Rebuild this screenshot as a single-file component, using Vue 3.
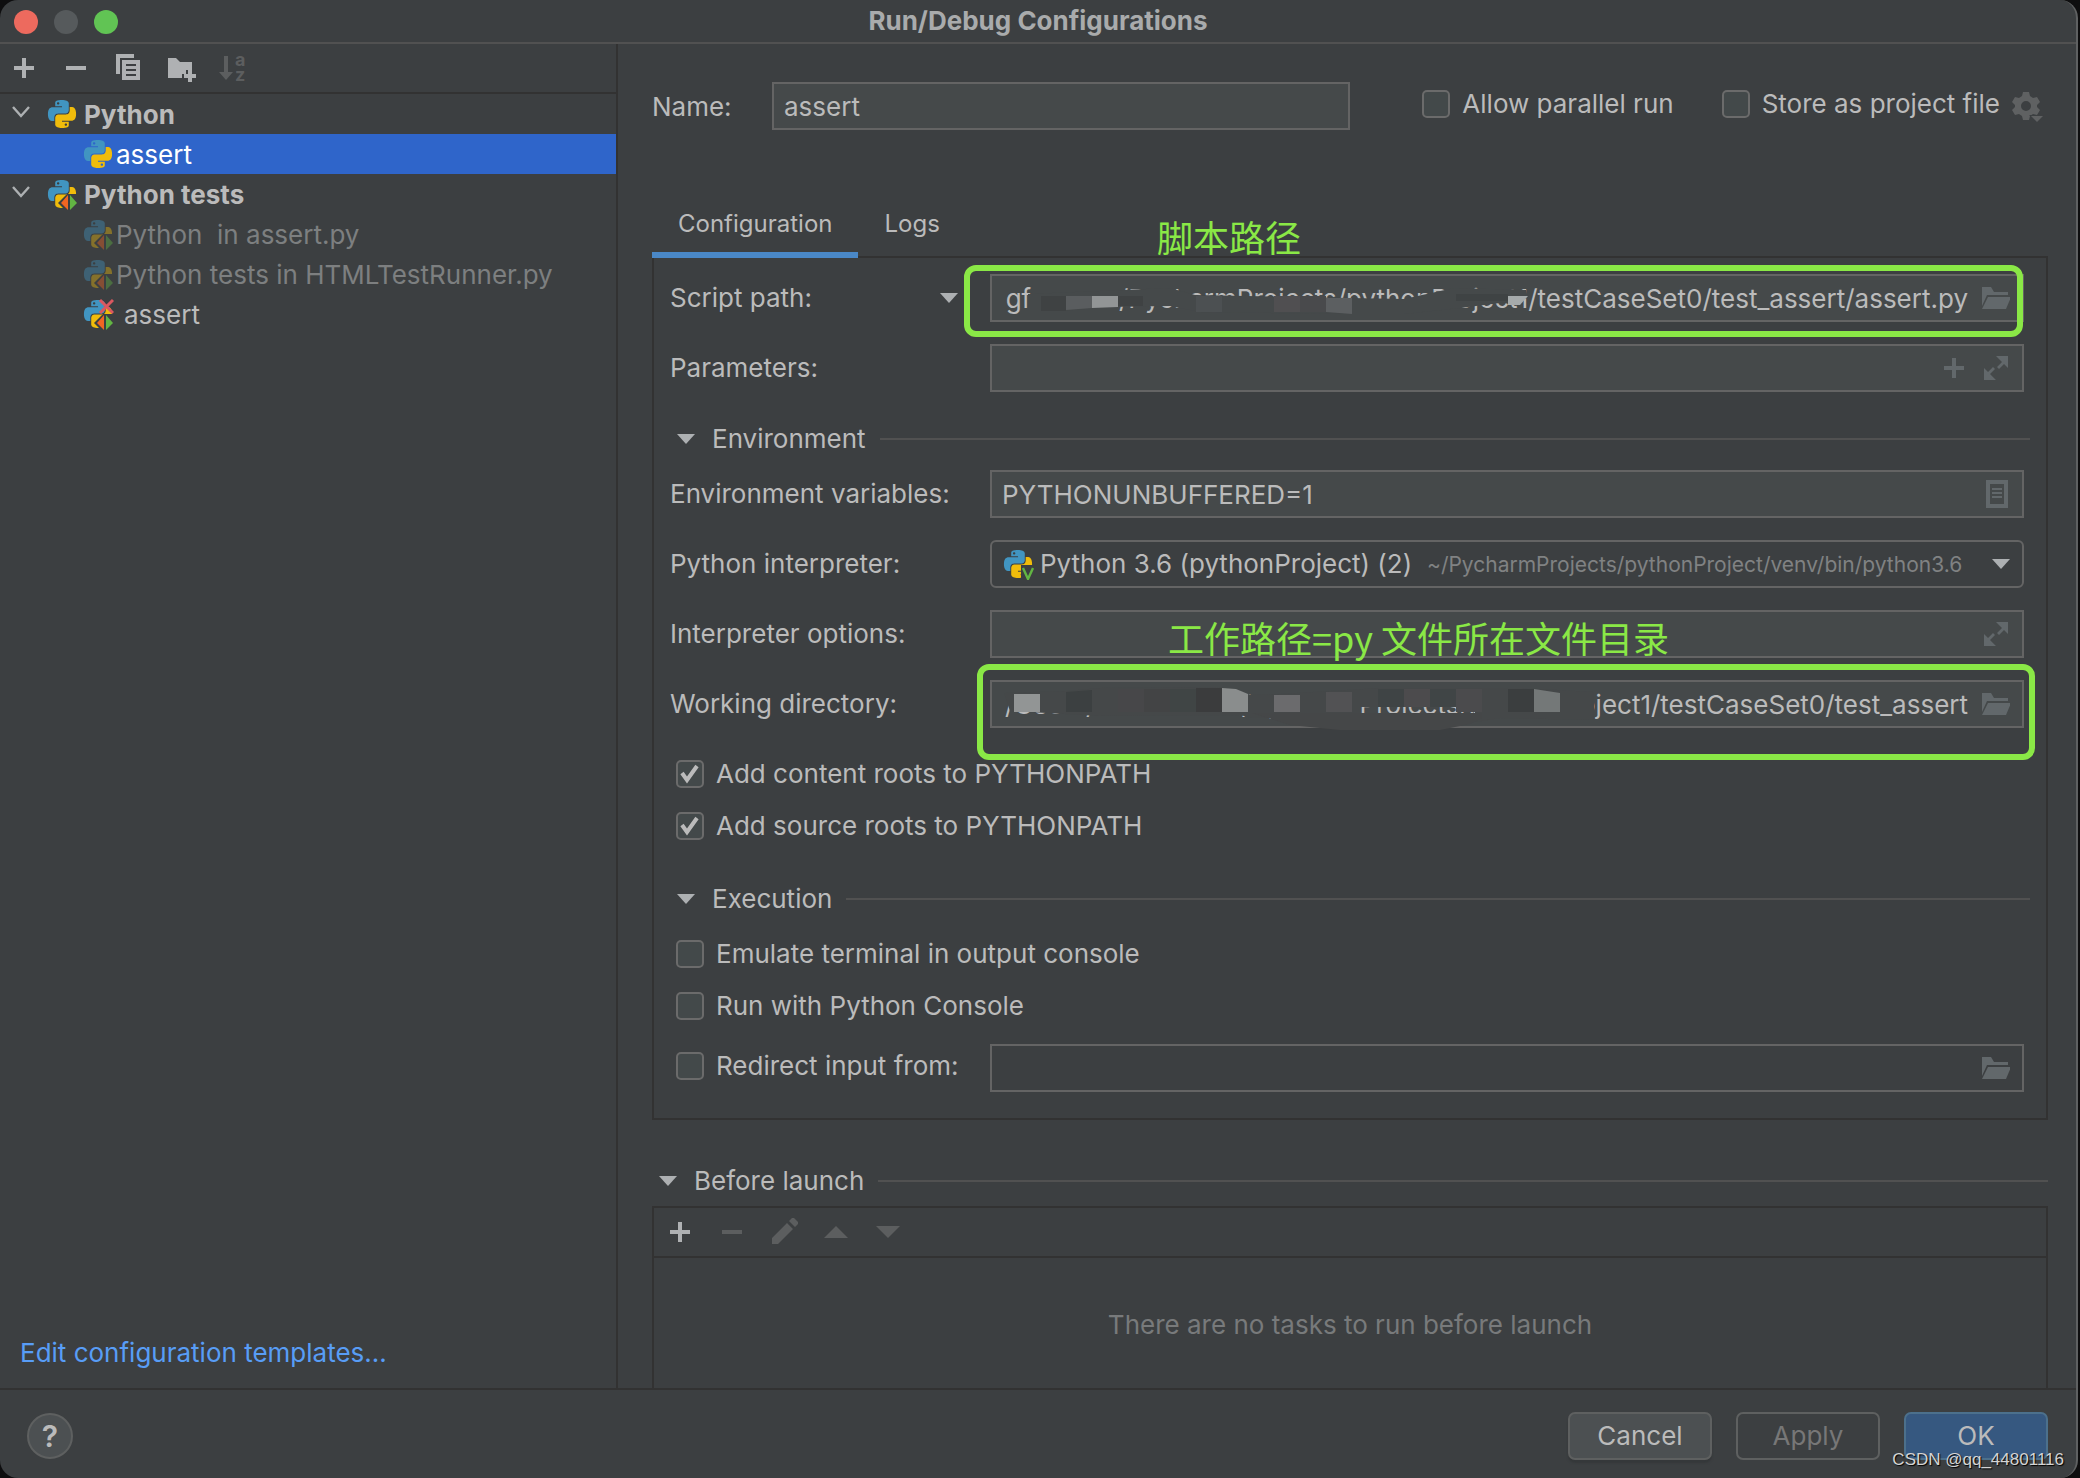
<script setup>
import { ref } from 'vue'

const snake =
  'M14.25.18l.9.2.73.26.59.3.45.32.34.34.25.34.16.33.1.3.04.26.02.2-.01.13V8.5l-.05.63-.13.55-.21.46-.26.38-.3.31-.33.25-.35.19-.35.14-.33.1-.3.07-.26.04-.21.02H8.77l-.69.05-.59.14-.5.22-.41.27-.33.32-.27.35-.2.36-.15.37-.1.35-.07.32-.04.27-.02.21v3.06H3.17l-.21-.03-.28-.07-.32-.12-.35-.18-.36-.26-.36-.36-.35-.46-.32-.59-.28-.73-.21-.88-.14-1.05-.05-1.23.06-1.22.16-1.04.24-.87.32-.71.36-.57.4-.44.42-.33.42-.24.4-.16.36-.1.32-.05.24-.01h.16l.06.01h8.16v-.83H6.18l-.01-2.75-.02-.37.05-.34.11-.31.17-.28.25-.26.31-.23.38-.2.44-.18.51-.15.58-.12.64-.1.71-.06.77-.04.84-.02 1.27.05zm-6.3 1.98l-.23.33-.08.41.08.41.23.34.33.22.41.09.41-.09.33-.22.23-.34.08-.41-.08-.41-.23-.33-.33-.22-.41-.09-.41.09z'

const rows = [
  { text: 'Python', kind: 'group' },
  { text: 'assert', kind: 'item', selected: true },
  { text: 'Python tests', kind: 'group', test: true },
  { text: 'Python  in assert.py', kind: 'item', test: true, dim: true },
  { text: 'Python tests in HTMLTestRunner.py', kind: 'item', test: true, dim: true },
  { text: 'assert', kind: 'item', test: true, failed: true },
]

const name = ref('assert')
const hidden = (n) => '\u00a0'.repeat(n)
const scriptPath = ref(`gf${hidden(12)}/PycharmProjects/pythonProject1/testCaseSet0/test_assert/assert.py`)
const workingDir = ref(`/Users/${hidden(20)}/PycharmProjects/pythonProject1/testCaseSet0/test_assert`)
const parameters = ref('')
const envVars = ref('PYTHONUNBUFFERED=1')
const options = ref('')
const redirectFile = ref('')
const parallel = ref(false)
const store = ref(false)
const contentRoots = ref(true)
const sourceRoots = ref(true)
const emulate = ref(false)
const runConsole = ref(false)
const redirect = ref(false)
</script>

<template>
  <div class="dialog">
    <svg class="defs" aria-hidden="true">
      <symbol id="py" viewBox="0 0 32 32">
        <g transform="translate(2 2) scale(1.1667)">
          <path :d="snake" fill="#4195c1" />
          <path :d="snake" fill="#f0bc0b" transform="rotate(180 12 12)" />
        </g>
      </symbol>
      <symbol id="folder" viewBox="0 0 28 28">
        <path d="M0 3h9l3 5h14v3H5L0 22z" fill="#62686b" />
        <path d="M6 13h23l-5 12H0z" fill="#62686b" />
      </symbol>
      <symbol id="expand" viewBox="0 0 28 28">
        <path d="M14 2h12v12l-4-4-5 5-2-2 5-5zM14 26H2V14l4 4 5-5 2 2-5 5z" fill="#62686b" />
      </symbol>
    </svg>

    <header class="titlebar">
      <div class="lights">
        <button class="light close" aria-label="Close"></button>
        <button class="light minimize" aria-label="Minimize"></button>
        <button class="light zoom" aria-label="Zoom"></button>
      </div>
      <h1>Run/Debug Configurations</h1>
    </header>

    <div class="body">
      <aside class="sidebar">
        <div class="toolbar">
          <button class="tool" aria-label="Add">
            <svg viewBox="0 0 32 32"><path d="M14 6h4v8h8v4h-8v8h-4v-8H6v-4h8z" /></svg>
          </button>
          <button class="tool" aria-label="Remove">
            <svg viewBox="0 0 32 32"><path d="M6 14h20v4H6z" /></svg>
          </button>
          <button class="tool" aria-label="Copy">
            <svg viewBox="0 0 32 32">
              <path d="M4 2h18v4H8v16H4z" />
              <path fill-rule="evenodd" d="M10 8h18v20H10zm4 4v2h10v-2zm0 5v2h10v-2zm0 5v2h10v-2z" />
            </svg>
          </button>
          <button class="tool" aria-label="New folder">
            <svg viewBox="0 0 32 32">
              <path d="M4 6h8l4 4h12v8h-6v4h-4v4H4z" />
              <path d="M24 18h4v4h4v4h-4v4h-4v-4h-4v-4h4z" />
            </svg>
          </button>
          <button class="tool off" aria-label="Sort" disabled>
            <svg viewBox="0 0 32 32"><path d="M8 4h4v16h5L10 28l-7-8h5z" /></svg>
            <span class="az"><span>a</span><span>z</span></span>
          </button>
        </div>
        <ul class="tree">
          <li
            v-for="(r, i) in rows"
            :key="i"
            :class="[r.kind, { selected: r.selected, dim: r.dim, failed: r.failed }]"
          >
            <svg v-if="r.kind === 'group'" class="chev" viewBox="0 0 20 12">
              <path d="M2 1l8 9 8-9" fill="none" stroke="#adb0b2" stroke-width="2.4" />
            </svg>
            <svg class="pyicon" viewBox="0 0 32 32">
              <use href="#py" />
              <g v-if="r.test">
                <path d="M12 25l9-9h11v16H19z" fill="#3c3f41" />
                <path d="M15 25l7-8v15z" fill="#f26522" />
                <path d="M24 17l7 8-7 7z" fill="#62b543" />
              </g>
              <path v-if="r.failed" d="M18 2l13 13M31 2L18 15" stroke="#db5860" stroke-width="3" />
            </svg>
            <span>{{ r.text }}</span>
          </li>
        </ul>
        <a class="templates" href="#">Edit configuration templates...</a>
      </aside>

      <main class="main">
        <div class="name-row">
          <label class="name-label" for="name">Name:</label>
          <div class="field name-field"><input id="name" v-model="name" type="text" /></div>
          <label class="check parallel"><input v-model="parallel" type="checkbox" />Allow parallel run</label>
          <label class="check"><input v-model="store" type="checkbox" />Store as project file</label>
          <button class="gear" aria-label="Storage options" disabled>
            <svg viewBox="0 0 32 32">
              <path
                fill="#5f6162"
                fill-rule="evenodd"
                d="M11 2h6l1 4 3 2 4-1 3 5-3 3v2l3 3-3 5-4-1-3 2-1 4h-6l-1-4-3-2-4 1-3-5 3-3v-2l-3-3 3-5 4 1 3-2zm3 9a5 5 0 1 0 0 10 5 5 0 0 0 0-10z"
              />
              <path d="M17 25h15l-7 7z" fill="#3c3f41" />
              <path d="M19 26h12l-6 6z" fill="#5f6162" />
            </svg>
          </button>
        </div>

        <nav class="tabs">
          <button class="tab active">Configuration</button>
          <button class="tab">Logs</button>
        </nav>

        <section class="panel">
          <div class="rows">
            <div class="row">
              <label for="script">Script path:</label>
              <button class="kind" aria-label="Choose target"><i class="tri"></i></button>
              <div class="field">
                <input id="script" v-model="scriptPath" class="end" type="text" />
                <button class="icon" aria-label="Browse"><svg><use href="#folder" /></svg></button>
                <svg class="smudge" viewBox="0 0 1034 60" aria-hidden="true">
                  <path d="M38 20L180 14 205 21 414 25 464 14 536 16 538 24 510 29 470 34 414 40 360 40 210 38 180 32 120 33 70 37 38 37z" fill="#45494a" />
                  <path d="M51 22h25v15H51zM128 22h25v10h-25z" fill="#3f4243" />
                  <path d="M76 22h26v12l-26 2z" fill="#5a5d5f" />
                  <path d="M102 22h26v11l-26 1z" fill="#929596" />
                  <path d="M206 22h26v16h-26z" fill="#4c5052" />
                  <path d="M284 22h26v16h-26z" fill="#504f51" />
                  <path d="M310 22h26v16h-26z" fill="#494a4c" />
                  <path d="M336 24h26v16l-26-2z" fill="#5c5f61" />
                  <path d="M466 20h52v7h-52z" fill="#3f4344" />
                  <path d="M518 22h20l-8 9h-12z" fill="#a5aaab" />
                </svg>
                <span class="mark mark-script"></span>
                <span class="note note-script">脚本路径</span>
              </div>
            </div>
            <div class="row">
              <label for="params">Parameters:</label>
              <div class="field">
                <input id="params" v-model="parameters" type="text" />
                <button class="icon" aria-label="Insert macro">
                  <svg viewBox="0 0 28 28"><path d="M12 4h4v8h8v4h-8v8h-4v-8H4v-4h8z" fill="#62686b" /></svg>
                </button>
                <button class="icon" aria-label="Expand"><svg><use href="#expand" /></svg></button>
              </div>
            </div>
          </div>

          <h2 class="section env"><i class="tri"></i>Environment</h2>

          <div class="rows">
            <div class="row">
              <label for="env">Environment variables:</label>
              <div class="field">
                <input id="env" v-model="envVars" type="text" />
                <button class="icon" aria-label="Edit variables">
                  <svg viewBox="0 0 28 28">
                    <path fill-rule="evenodd" fill="#62686b" d="M4 0h22v28H4zm4 4v20h14V4z" />
                    <path fill="#62686b" d="M10 8h10v2H10zm0 4h10v2H10zm0 4h10v2H10z" />
                  </svg>
                </button>
              </div>
            </div>
            <div class="row">
              <label for="interp">Python interpreter:</label>
              <div class="field combo">
                <svg class="pyicon" viewBox="0 0 32 32">
                  <use href="#py" />
                  <path d="M19 17h13v15H19z" fill="#3c3f41" />
                  <path d="M21 20l5 11 5-11" fill="none" stroke="#62b543" stroke-width="2.4" />
                </svg>
                <select id="interp"><option>Python 3.6 (pythonProject) (2)</option></select>
                <span class="path">~/PycharmProjects/pythonProject/venv/bin/python3.6</span>
                <i class="tri"></i>
              </div>
            </div>
            <div class="row">
              <label for="opts">Interpreter options:</label>
              <div class="field">
                <input id="opts" v-model="options" type="text" />
                <button class="icon" aria-label="Expand"><svg><use href="#expand" /></svg></button>
              </div>
            </div>
            <div class="row">
              <label for="wd">Working directory:</label>
              <div class="field">
                <input id="wd" v-model="workingDir" class="end" type="text" />
                <button class="icon" aria-label="Browse"><svg><use href="#folder" /></svg></button>
                <svg class="smudge" viewBox="0 0 1034 60" aria-hidden="true">
                  <path d="M14 13L76 11 110 8 230 7 262 15 290 14 390 8 530 8 604 12 604 40 510 38 485 42 485 27 370 27 370 38 262 38 250 35 110 36 20 31z" fill="#454849" />
                  <path d="M262 33h230v5l-12 6-30 6H350l-50-5z" fill="#454748" />
                  <path d="M24 14h26v18H24z" fill="#929595" />
                  <path d="M76 12l26-2v22H76z" fill="#3c4041" />
                  <path d="M128 9h26v23h-26z" fill="#474749" />
                  <path d="M154 9h26v23h-26z" fill="#434445" />
                  <path d="M180 9h26v23h-26z" fill="#404545" />
                  <path d="M206 8h26v24h-26z" fill="#3b3c3d" />
                  <path d="M232 8l14 1 12 5v18h-26z" fill="#8a8d8d" />
                  <path d="M284 15h26v17h-26z" fill="#6b6b6d" />
                  <path d="M336 12h26v20h-26z" fill="#525254" />
                  <path d="M388 9h26v18h-26z" fill="#3f4445" />
                  <path d="M414 9h26v18h-26z" fill="#4c4b4d" />
                  <path d="M440 9h26v18h-26z" fill="#404546" />
                  <path d="M466 9h26v23h-26z" fill="#4b4b4d" />
                  <path d="M518 9h26v23h-26z" fill="#3b3e3f" />
                  <path d="M544 9l26 4v19h-26z" fill="#747878" />
                </svg>
                <span class="mark mark-wd"></span>
                <span class="note note-wd">工作路径=py 文件所在文件目录</span>
              </div>
            </div>
          </div>

          <div class="checks roots">
            <label class="check"><input v-model="contentRoots" type="checkbox" />Add content roots to PYTHONPATH</label>
            <label class="check"><input v-model="sourceRoots" type="checkbox" />Add source roots to PYTHONPATH</label>
          </div>

          <h2 class="section exec"><i class="tri"></i>Execution</h2>

          <div class="checks">
            <label class="check"><input v-model="emulate" type="checkbox" />Emulate terminal in output console</label>
            <label class="check"><input v-model="runConsole" type="checkbox" />Run with Python Console</label>
            <div class="redirect">
              <label class="check"><input v-model="redirect" type="checkbox" />Redirect input from:</label>
              <div class="field plain">
                <input v-model="redirectFile" type="text" aria-label="Redirect input from" />
                <button class="icon" aria-label="Browse"><svg><use href="#folder" /></svg></button>
              </div>
            </div>
          </div>
        </section>

        <h2 class="section before"><i class="tri"></i>Before launch</h2>
        <section class="tasks">
          <div class="toolbar">
            <button class="tool" aria-label="Add task">
              <svg viewBox="0 0 32 32"><path d="M14 6h4v8h8v4h-8v8h-4v-8H6v-4h8z" /></svg>
            </button>
            <button class="tool off" aria-label="Remove task" disabled>
              <svg viewBox="0 0 32 32"><path d="M6 14h20v4H6z" /></svg>
            </button>
            <button class="tool off" aria-label="Edit task" disabled>
              <svg viewBox="0 0 32 32">
                <path d="M4 22L19 7l6 6L10 28H4zM21 5l3-3h2l4 4v2l-3 3z" />
              </svg>
            </button>
            <button class="tool off" aria-label="Move up" disabled>
              <svg viewBox="0 0 32 32"><path d="M16 10l12 12H4z" /></svg>
            </button>
            <button class="tool off" aria-label="Move down" disabled>
              <svg viewBox="0 0 32 32"><path d="M4 10h24L16 22z" /></svg>
            </button>
          </div>
          <p>There are no tasks to run before launch</p>
        </section>
      </main>
    </div>

    <footer class="footer">
      <button class="help" aria-label="Help">?</button>
      <button class="btn cancel">Cancel</button>
      <button class="btn" disabled>Apply</button>
      <button class="btn ok">OK</button>
      <span class="watermark">CSDN @qq_44801116</span>
    </footer>
  </div>
</template>

<style>
body {
  margin: 0;
  background: #0e0e0f;
}
</style>

<style scoped>
* {
  box-sizing: border-box;
}
.dialog {
  display: flex;
  flex-direction: column;
  min-height: 100vh;
  margin-right: 2px;
  border-right: 2px solid #5f6162;
  border-radius: 18px;
  overflow: hidden;
  background: #3c3f41;
  color: #bbbbbb;
  font: 26px/30px Inter, sans-serif;
}
button,
input,
select {
  font: inherit;
  color: inherit;
  margin: 0;
  padding: 0;
  border: 0;
  background: none;
  outline: 0;
}
.defs {
  position: absolute;
  width: 0;
  height: 0;
}
svg {
  display: block;
}

.titlebar {
  position: relative;
  display: flex;
  align-items: center;
  justify-content: center;
  height: 44px;
  border-bottom: 2px solid #515151;
}
.titlebar h1 {
  margin: 0;
  font-size: 26px;
  font-weight: 700;
  color: #a9abac;
}
.lights {
  position: absolute;
  left: 14px;
  top: 10px;
  display: flex;
  gap: 16px;
}
.light {
  width: 24px;
  height: 24px;
  border-radius: 50%;
}
.close {
  background: #ed6a5e;
}
.minimize {
  background: #565a5c;
}
.zoom {
  background: #61c454;
}

.body {
  display: flex;
  flex: 1;
}
.sidebar {
  display: flex;
  flex-direction: column;
  flex: none;
  width: 618px;
  border-right: 2px solid #323232;
}
.toolbar {
  display: flex;
  align-items: center;
  gap: 20px;
  height: 50px;
  padding-left: 8px;
  border-bottom: 2px solid #323232;
}
.tool {
  display: flex;
  position: relative;
  width: 32px;
  height: 32px;
  fill: #afb1b3;
}
.tool svg {
  width: 32px;
  height: 32px;
}
.off {
  fill: #5c5e5f;
  color: #5c5e5f;
}
.az {
  position: absolute;
  left: 19px;
  top: 0;
  display: grid;
  font-size: 18px;
  font-weight: 700;
  line-height: 15px;
}
.tree {
  flex: 1;
  margin: 0;
  padding: 0;
  list-style: none;
}
.tree li {
  display: flex;
  align-items: center;
  height: 40px;
  white-space: pre;
}
.tree span {
  padding-top: 2px;
}
.pyicon {
  flex: none;
  width: 32px;
  height: 32px;
}
.chev {
  width: 20px;
  height: 12px;
  margin: 0 15px 4px 11px;
}
.group {
  font-weight: 700;
}
.group span {
  margin-left: 6px;
}
.item {
  padding-left: 82px;
}
.item span {
  margin-left: 2px;
}
.failed span {
  margin-left: 10px;
}
.selected {
  background: #2f65ca;
  color: #fff;
}
.dim {
  color: #7d7f80;
}
.dim .pyicon {
  opacity: 0.4;
}
.templates {
  margin: 0 20px 20px;
  color: #589df6;
  text-decoration: none;
}

.main {
  display: flex;
  flex-direction: column;
  flex: 1;
  min-width: 0;
  padding: 38px 28px 0 34px;
}
.name-row {
  display: flex;
  align-items: center;
  height: 48px;
}
.name-label {
  width: 120px;
  padding-top: 2px;
}
.field {
  position: relative;
  display: flex;
  align-items: center;
  gap: 14px;
  height: 48px;
  padding: 0 12px 0 10px;
  border: 2px solid #646464;
  background: #45494a;
}
.field input {
  flex: 1;
  min-width: 0;
  height: 40px;
}
.field .end {
  text-align: right;
}
.name-field {
  flex: 1;
  max-width: 578px;
}
.field.plain {
  background: none;
}
.icon,
.icon svg {
  flex: none;
  width: 28px;
  height: 28px;
}
.check {
  display: flex;
  align-items: center;
  gap: 12px;
  height: 28px;
  white-space: nowrap;
}
.check input {
  appearance: none;
  width: 28px;
  height: 28px;
  border: 2px solid #6b6b6b;
  border-radius: 5px;
  background: #43494a;
}
.check input:checked {
  background: #43494a
    url("data:image/svg+xml,%3Csvg xmlns='http://www.w3.org/2000/svg' viewBox='0 0 24 24'%3E%3Cpath d='M4 11l5 7L19 4' fill='none' stroke='%23bbb' stroke-width='4'/%3E%3C/svg%3E");
}
.name-row .check {
  margin-bottom: 4px;
}
.name-row .parallel {
  margin-left: auto;
  margin-right: 48px;
}
.gear,
.gear svg {
  width: 32px;
  height: 32px;
}
.gear {
  margin: 0 4px 0 12px;
}

.tabs {
  display: flex;
  margin-top: 58px;
}
.tab {
  height: 70px;
  padding: 2px 26px 0;
  font-size: 24px;
}
.active {
  position: relative;
  box-shadow: inset 0 -6px #4a88c7;
}
.panel {
  margin-top: -2px;
  padding: 16px 22px 26px 16px;
  border: 2px solid #323232;
}
.rows {
  display: grid;
  gap: 22px;
}
.row {
  display: flex;
  align-items: center;
}
.row label {
  width: 270px;
  white-space: nowrap;
}
.row .field {
  flex: 1;
  min-width: 0;
  margin-left: 50px;
}
.kind {
  display: flex;
  width: 18px;
}
.row .kind + .field {
  margin-left: 32px;
}
.tri {
  flex: none;
  width: 18px;
  height: 10px;
  background: #adb0b2;
  clip-path: polygon(0 0, 100% 0, 50% 100%);
}
.field.combo {
  gap: 6px;
  border-radius: 6px;
  background: none;
}
.combo select {
  appearance: none;
  height: 40px;
}
.path {
  flex: 1;
  padding: 2px 0 0 8px;
  font-size: 21px;
  color: #808283;
  white-space: nowrap;
}
.section {
  display: flex;
  align-items: center;
  margin: 0;
  font-size: 26px;
  font-weight: 400;
}
.section::after {
  content: '';
  flex: 1;
  height: 2px;
  margin-left: 14px;
  background: #515151;
}
.section .tri {
  margin: 0 17px 0 7px;
}
.env {
  margin: 32px -6px 16px 0;
}
.exec {
  margin: 44px -6px 26px 0;
}
.before {
  margin: 46px 0 10px;
}
.checks {
  display: grid;
  gap: 24px;
  padding-left: 6px;
}
.roots {
  margin-top: 32px;
  justify-items: start;
}
.redirect {
  display: flex;
  align-items: center;
}
.redirect .check {
  width: 314px;
  margin-bottom: 4px;
}
.redirect .field {
  flex: 1;
}

.smudge {
  position: absolute;
  left: -2px;
  top: -2px;
  width: 1034px;
  height: 60px;
  pointer-events: none;
}
.mark {
  position: absolute;
  border: 6px solid #8ae846;
  border-radius: 12px;
  pointer-events: none;
}
.mark-script {
  inset: -11px -1px -17px -28px;
}
.mark-wd {
  inset: -18px -13px -34px -15px;
}
.note {
  position: absolute;
  font: 36px/40px 'Noto Sans CJK SC', sans-serif;
  color: #8ae846;
  white-space: nowrap;
}
.note-script {
  left: 165px;
  top: -60px;
}
.note-wd {
  left: 176px;
  top: -65px;
}

.tasks {
  display: flex;
  flex-direction: column;
  flex: 1;
  border: 2px solid #323232;
  border-bottom: 0;
}
.tasks .toolbar {
  padding-left: 10px;
}
.tasks p {
  margin: 52px 0 48px;
  text-align: center;
  color: #787a7b;
}

.footer {
  position: relative;
  display: flex;
  align-items: center;
  gap: 24px;
  height: 90px;
  padding: 4px 28px 0 27px;
  border-top: 2px solid #323232;
}
.help {
  width: 46px;
  height: 46px;
  margin-right: auto;
  border: 2px solid #5e6060;
  border-radius: 50%;
  background: #4c5052;
  font-size: 30px;
  font-weight: 600;
}
.btn {
  width: 144px;
  height: 48px;
  border: 2px solid #5e6060;
  border-radius: 7px;
}
.btn:disabled {
  color: #777777;
}
.cancel {
  background: #4c5052;
  box-shadow: 0 3px 2px #35383a;
}
.ok {
  border-color: #4c708c;
  background: #365880;
}
.watermark {
  position: absolute;
  right: 12px;
  bottom: 6px;
  font: 17px/24px 'Liberation Sans', sans-serif;
  color: #d4d4d4;
  text-shadow: 1px 1px 1px #000;
}
</style>
